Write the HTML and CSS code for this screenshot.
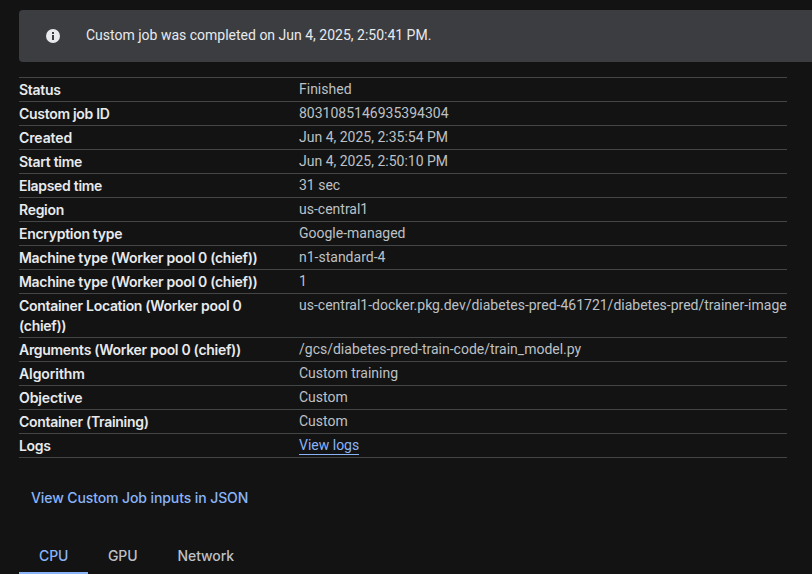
FILE: index.html
```html
<!DOCTYPE html>
<html lang="en">
<head>
<meta charset="utf-8">
<title>Custom job</title>
<link rel="stylesheet" href="styles.css">
</head>
<body>
<main class="page">
  <div class="banner">
    <svg class="info" viewBox="0 0 14 14" aria-hidden="true"><circle cx="7" cy="7" r="7" fill="#e8eaed"/><path d="M6 3h2v2H6zM6 6h2v5H6z" fill="#3b3d41"/></svg>
    <span class="message">Custom job was completed on Jun 4, 2025, 2:50:41 PM.</span>
  </div>
  <dl class="details">
    <div class="row"><dt>Status</dt><dd>Finished</dd></div>
    <div class="row"><dt>Custom job ID</dt><dd>8031085146935394304</dd></div>
    <div class="row"><dt class="wide">Created</dt><dd>Jun 4, 2025, 2:35:54 PM</dd></div>
    <div class="row"><dt>Start time</dt><dd>Jun 4, 2025, 2:50:10 PM</dd></div>
    <div class="row"><dt>Elapsed time</dt><dd>31 sec</dd></div>
    <div class="row"><dt>Region</dt><dd>us-central1</dd></div>
    <div class="row"><dt>Encryption type</dt><dd>Google-managed</dd></div>
    <div class="row"><dt>Machine type (Worker pool 0 (chief))</dt><dd>n1-standard-4</dd></div>
    <div class="row"><dt>Machine type (Worker pool 0 (chief))</dt><dd>1</dd></div>
    <div class="row"><dt>Container Location (Worker pool 0<br>(chief))</dt><dd>us-central1-docker.pkg.dev/diabetes-pred-461721/diabetes-pred/trainer-image</dd></div>
    <div class="row"><dt>Arguments (Worker pool 0 (chief))</dt><dd>/gcs/diabetes-pred-train-code/train_model.py</dd></div>
    <div class="row"><dt class="wide">Algorithm</dt><dd>Custom training</dd></div>
    <div class="row"><dt class="wide">Objective</dt><dd>Custom</dd></div>
    <div class="row"><dt>Container (Training)</dt><dd>Custom</dd></div>
    <div class="row"><dt>Logs</dt><dd><a class="link">View logs</a></dd></div>
  </dl>
  <a class="json">View Custom Job inputs in JSON</a>
  <nav class="tabs"><a class="tab active">CPU</a><a class="tab">GPU</a><a class="tab">Network</a></nav>
</main>
</body>
</html>
```
FILE: styles.css
```css
* { box-sizing: border-box; }
body { margin: 0; background: #131313; color: #bdc1c6; font: 14px/20px Roboto, sans-serif; overflow: hidden; }
.page { padding: 10px 0 0 19px; height: 574px; }
.banner { display: flex; align-items: center; gap: 26px; height: 52px; padding: 0 27px; background: #3b3d41; border-radius: 4px 0 0 4px; color: #e8eaed; }
.info { width: 14px; height: 14px; }
.message { padding-bottom: 2px; }
.details { width: 768px; margin: 15px 0 0; border-top: 1px solid #444546; }
.row { display: grid; grid-template-columns: 280px 1fr; padding-top: 1px; min-height: 24px; border-bottom: 1px solid #444546; }
dt { padding: 1px 0; font: 600 14px/20px Inter, sans-serif; letter-spacing: -0.3px; color: #e8eaed; white-space: nowrap; }
.wide { letter-spacing: -0.1px; }
dd { margin: 0; white-space: nowrap; }
.link { padding-bottom: 1px; color: #8ab4f8; border-bottom: 1px solid #8ab4f8; }
.json { display: block; margin: 30px 0 0 12px; font: 500 14px/20px Inter, sans-serif; letter-spacing: -0.1px; color: #8ab4f8; }
.tabs { display: flex; margin-top: 30px; font: 500 14px/20px Inter, sans-serif; letter-spacing: -0.1px; }
.tab { height: 36px; padding: 8px 20px; }
.active { width: 69px; color: #8ab4f8; border-bottom: 2px solid #8ab4f8; }
```
